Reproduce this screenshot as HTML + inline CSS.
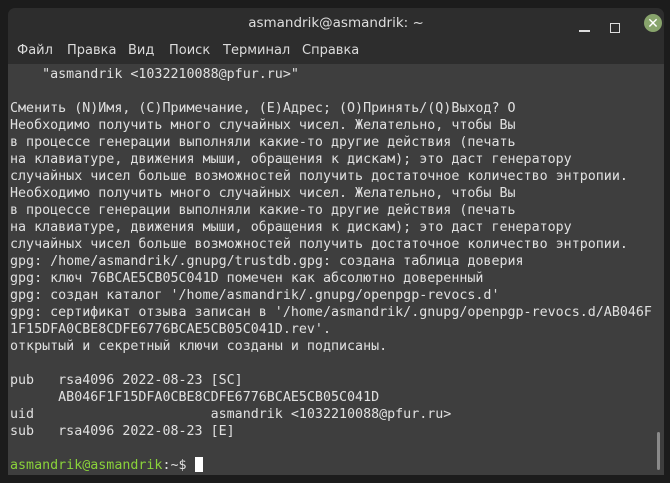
<!DOCTYPE html>
<html><head><meta charset="utf-8"><style>
body{margin:0;width:670px;height:483px;background:#1c1c1c;overflow:hidden;position:relative;font-family:"Liberation Sans","DejaVu Sans",sans-serif}
.win{position:absolute;left:8px;top:8px;width:656px;height:467px;background:#2d2d2d;border-radius:7px 7px 0 0;overflow:hidden}
.title{position:absolute;left:0;right:0;top:0;height:30px;text-align:center;line-height:30px;color:#dedede;font-size:13.5px;font-family:"DejaVu Sans",sans-serif}
.menu{position:absolute;left:0;top:30px;height:26px;right:0;color:#dcdcdc;font-size:13px;font-family:"DejaVu Sans",sans-serif}
.menu span{position:absolute;top:5px}
.term{position:absolute;left:0;top:56px;right:0;bottom:0;background:#3e3e3e}
pre{margin:0;position:absolute;left:2px;top:1.5px;font-family:"DejaVu Sans Mono",monospace;font-size:13.33px;line-height:17px;color:#e0e0e0}
.g{color:#8ad33a}
.cur{display:inline-block;width:8px;height:15px;background:#fff;vertical-align:-3px}
.sb{position:absolute;right:4px;top:368px;width:3px;height:38px;background:#8a8a8a;border-radius:2px}
</style></head><body>
<div class="win">
<div class="title">asmandrik@asmandrik: ~</div>
<div style="position:absolute;left:571px;top:22px;width:11px;height:1.5px;background:#ddd"></div>
<div style="position:absolute;left:602px;top:15px;width:8px;height:8px;border:1.5px solid #ddd"></div>
<div style="position:absolute;left:636px;top:6px;width:18px;height:18px;border-radius:50%;background:#88a46c;color:#fff;font-size:14px;line-height:18px;text-align:center">✕</div>
<div class="menu"><span style="left:9px">Файл</span><span style="left:59px">Правка</span><span style="left:120px">Вид</span><span style="left:161px">Поиск</span><span style="left:215px">Терминал</span><span style="left:294px">Справка</span></div>
<div class="term">
<pre>    "asmandrik &lt;1032210088@pfur.ru&gt;"

Сменить (N)Имя, (C)Примечание, (E)Адрес; (O)Принять/(Q)Выход? O
Необходимо получить много случайных чисел. Желательно, чтобы Вы
в процессе генерации выполняли какие-то другие действия (печать
на клавиатуре, движения мыши, обращения к дискам); это даст генератору
случайных чисел больше возможностей получить достаточное количество энтропии.
Необходимо получить много случайных чисел. Желательно, чтобы Вы
в процессе генерации выполняли какие-то другие действия (печать
на клавиатуре, движения мыши, обращения к дискам); это даст генератору
случайных чисел больше возможностей получить достаточное количество энтропии.
gpg: /home/asmandrik/.gnupg/trustdb.gpg: создана таблица доверия
gpg: ключ 76BCAE5CB05C041D помечен как абсолютно доверенный
gpg: создан каталог '/home/asmandrik/.gnupg/openpgp-revocs.d'
gpg: сертификат отзыва записан в '/home/asmandrik/.gnupg/openpgp-revocs.d/AB046F
1F15DFA0CBE8CDFE6776BCAE5CB05C041D.rev'.
открытый и секретный ключи созданы и подписаны.

pub   rsa4096 2022-08-23 [SC]
      AB046F1F15DFA0CBE8CDFE6776BCAE5CB05C041D
uid                      asmandrik &lt;1032210088@pfur.ru&gt;
sub   rsa4096 2022-08-23 [E]

<span class="g">asmandrik@asmandrik</span>:~$ <span class="cur"></span></pre>
<div class="sb"></div>
</div>
</div>
</body></html>
